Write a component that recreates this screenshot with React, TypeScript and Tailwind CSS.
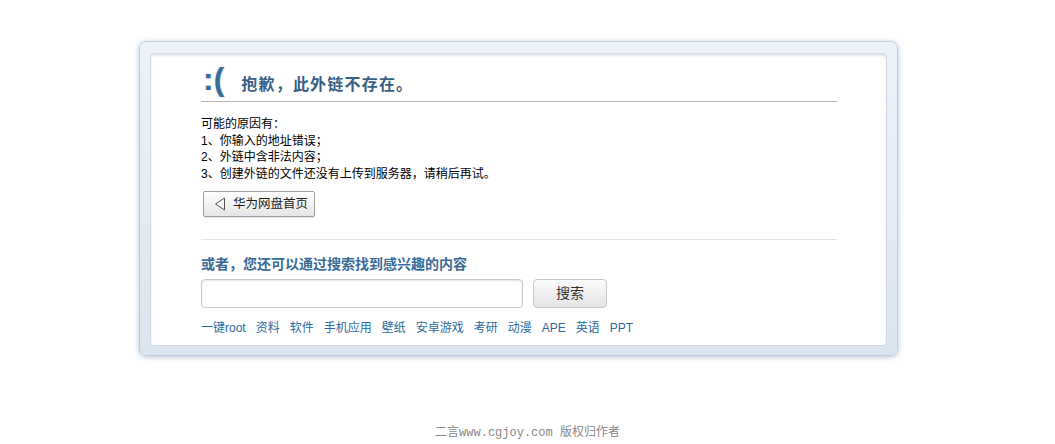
import React from "react";

const cjk = '"Liberation Sans", "Noto Sans CJK SC", sans-serif';

export default function App() {
  const links = ["一键root", "资料", "软件", "手机应用", "壁纸", "安卓游戏", "考研", "动漫", "APE", "英语", "PPT"];
  return (
    <div className="w-[1055px] h-[444px] bg-white overflow-hidden" style={{ fontFamily: cjk }}>
      <div className="pt-[41px] pl-[139px]">
        <div className="w-[759px] h-[315px] rounded-[7px] border border-[#c0cfdd] bg-gradient-to-b from-[#ecf2f8] to-[#dce6f0] shadow-[0_1px_5px_rgba(100,135,175,0.5)] pt-[11px] pl-[10px] pr-[10px] pb-[9px]">
          <div className="h-full rounded-[4px] border border-[#d0d9e2] bg-white shadow-[inset_0_2px_2px_rgba(170,180,190,0.35)] pl-[50px] pr-[49px] pt-[7px]">
            <div className="h-[41px] flex items-end border-b border-[#b5b5b5] pb-[4px]">
              <span
                className="text-[32px] leading-[35px] font-bold text-[#3b6c98] pl-[2px] [text-shadow:0_0_2px_rgba(60,110,160,0.35)]"
                style={{ fontFamily: '"Liberation Sans", sans-serif' }}
              >
                :(
              </span>
              <span className="ml-[17px] mb-[2px] text-[16px] leading-[20px] font-bold tracking-[1.2px] text-[#3a5f86]">抱歉，此外链不存在。</span>
            </div>
            <div className="mt-[14px] text-[12px] leading-[16.5px] text-black">
              <div>可能的原因有：</div>
              <div>1、你输入的地址错误；</div>
              <div>2、外链中含非法内容；</div>
              <div>3、创建外链的文件还没有上传到服务器，请稍后再试。</div>
            </div>
            <div className="mt-[9px] ml-[2px] w-[112px] h-[26px] flex items-center border border-[#9e9e9e] rounded-[2px] bg-gradient-to-b from-white to-[#e6e6e6] shadow-[0_1px_1px_rgba(0,0,0,0.12)]">
              <svg width="12" height="14" viewBox="0 0 12 14" className="ml-[10px]">
                <path d="M10.5 1 L1.5 7 L10.5 13 Z" fill="none" stroke="#555" strokeWidth="1" />
              </svg>
              <span className="ml-[7px] text-[12.5px] leading-[16px] text-[#222]">华为网盘首页</span>
            </div>
            <div className="mt-[22px] border-t border-[#e2e2e2]" />
            <div className="mt-[14px] text-[14px] leading-[20px] font-bold text-[#3a6b96]">或者，您还可以通过搜索找到感兴趣的内容</div>
            <div className="mt-[5px] flex items-center">
              <div className="w-[322px] h-[29px] rounded-[4px] border border-[#c9c9c9] bg-white shadow-[inset_0_1px_2px_rgba(0,0,0,0.12)]" />
              <div className="ml-[10px] w-[74px] h-[29px] rounded-[4px] border border-[#c6c6c6] bg-gradient-to-b from-[#fbfbfb] to-[#e4e4e4] flex items-center justify-center text-[14px] text-[#333]">
                搜索
              </div>
            </div>
            <div className="mt-[12px] flex gap-[10px] text-[12px] leading-[16px] text-[#2c6aa0]">
              {links.map((l) => (
                <span key={l}>{l}</span>
              ))}
            </div>
          </div>
        </div>
      </div>
      <div className="mt-[70px] flex justify-center">
        <span className="text-[12px] leading-[14px] text-[#888]" style={{ fontFamily: '"Liberation Mono", "Noto Sans CJK SC", monospace' }}>
          二言www.cgjoy.com 版权归作者
        </span>
      </div>
    </div>
  );
}
